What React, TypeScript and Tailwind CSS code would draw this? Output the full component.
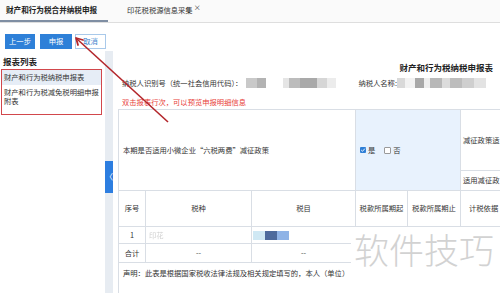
import React from "react";

const F = { fontFamily: '"Noto Sans CJK SC", "Noto Sans", sans-serif' };

function Mosaic({ cells }: { cells: [number, string][] }) {
  return (
    <div className="flex h-[10px] blur-[0.6px]">
      {cells.map(([w, c], i) => (
        <div key={i} style={{ width: w, background: c }} className="h-full" />
      ))}
    </div>
  );
}

export default function App() {
  return (
    <div style={F} className="relative w-[500px] h-[293px] overflow-hidden bg-white text-[#333]">
      {/* tab bar */}
      <div className="h-[23px] bg-[#fafafa] border-b border-[#dedede] flex items-stretch">
        <div className="w-[108px] border-b-2 border-[#7f8ea3] flex items-center pl-[6px] text-[7.6px] font-bold leading-none text-[#222]">
          财产和行为税合并纳税申报
        </div>
        <div className="ml-[19px] flex items-start pt-[6px] text-[7.3px] leading-[8px] text-[#333]">
          印花税税源信息采集
          <span className="ml-[1px] -mt-[2px] text-[7px] leading-none">×</span>
        </div>
      </div>

      {/* buttons */}
      <div className="flex items-center gap-[4px] pl-[5px] pt-[8px] h-[28px]">
        <div className="w-[30px] h-[15px] bg-[#2e80d8] text-white text-[7.3px] flex items-center justify-center">上一步</div>
        <div className="ml-[1px] w-[32px] h-[15px] bg-[#2e80d8] text-white text-[7.3px] flex items-center justify-center">申报</div>
        <div className="-ml-[1px] w-[31px] h-[15px] bg-white border border-[#a9c9ea] text-[#3d7fcc] text-[7.3px] flex items-center justify-center">取消</div>
      </div>

      {/* split area */}
      <div className="flex h-[242px]">
        {/* left panel */}
        <div className="w-[105px] pt-[4px]">
          <div className="pl-[3px] h-[12px] text-[8.5px] font-bold leading-[12px] text-[#222]">报表列表</div>
          <div className="mt-[2px] ml-[1px] w-[101px] border border-[#d2474c] text-[7.3px] text-[#333]">
            <div className="h-[15px] bg-[#e6edf6] pl-[2px] leading-[15px]">财产和行为税纳税申报表</div>
            <div className="pl-[2px] pt-[3px] pb-[8px] leading-[9px]">财产和行为税减免税明细申报附表</div>
          </div>
        </div>

        {/* splitter */}
        <div className="w-[8px] bg-[#e7ecf2] flex flex-col">
          <div className="h-[110px]" />
          <div className="h-[32px] bg-[#2d7ee0] text-white text-[8px] flex items-center justify-center leading-none">〈</div>
        </div>

        {/* main */}
        <div className="flex-1 pl-[5px] pt-[10px] min-w-0">
          <div className="h-[12px] leading-[12px] text-right pr-[7px] text-[8.5px] font-bold text-[#222]">财产和行为税纳税申报表</div>
          <div className="mt-[4px] h-[12px] flex items-center text-[7.3px] pl-[4px]">
            <span className="whitespace-nowrap">纳税人识别号（统一社会信用代码）：</span>
            <Mosaic cells={[[4, "#fff"], [11, "#c9c9c9"], [9, "#b3b3b3"], [17, "#fff"], [6, "#e5e5e5"], [11, "#bcbcbc"], [17, "#a9a9a9"], [10, "#d6d6d6"], [9, "#ececec"]]} />
            <span className="ml-[22px] whitespace-nowrap">纳税人名称:</span>
            <Mosaic cells={[[8, "#d9d9d9"], [10, "#f2f2f2"], [9, "#a8a8a8"], [6, "#eeeeee"], [12, "#b8b8b8"], [8, "#dcdcdc"], [12, "#bdbdbd"], [12, "#cfcfcf"], [12, "#e3e3e3"]]} />
          </div>
          <div className="mt-[7px] h-[12px] leading-[12px] pl-[4px] text-[7.3px] text-[#e8413a]">双击报表行次，可以预览申报明细信息</div>

          {/* table */}
          <div className="mt-[1px] grid grid-cols-[27px_106px_104px_52px_53px_40px] grid-rows-[61px_20px_36px_17px_19px_40px] border-l border-t border-[#d9dee5] text-[7.3px] w-[383px] overflow-hidden">
            <div className="col-span-3 row-span-2 border-r border-b border-[#d9dee5] flex items-center pl-[4px] whitespace-nowrap">
              本期是否适用小微企业“六税两费”减征政策
            </div>
            <div className="col-span-2 row-span-2 border-r border-b border-[#d9dee5] bg-[#e8f2fd] flex items-center pl-[4px] gap-[1px]">
              <span className="w-[6px] h-[6px] bg-[#2f7fd6] rounded-[1px] flex items-center justify-center">
                <svg viewBox="0 0 6 6" className="w-[6px] h-[6px]"><path d="M1.2 3 L2.5 4.3 L4.9 1.6" stroke="white" strokeWidth="0.9" fill="none" /></svg>
              </span>
              <span className="ml-[1px]">是</span>
              <span className="ml-[8px] w-[7px] h-[7px] border border-[#9a9a9a] bg-white rounded-[1px]" />
              <span className="ml-[1px]">否</span>
            </div>
            <div className="border-b border-[#d9dee5] flex items-center pl-[2px] whitespace-nowrap overflow-hidden">减征政策适</div>
            <div className="border-b border-[#d9dee5] flex items-center pl-[2px] whitespace-nowrap overflow-hidden">适用减征政</div>

            <div className="border-r border-b border-[#d9dee5] flex items-center justify-center">序号</div>
            <div className="border-r border-b border-[#d9dee5] flex items-center justify-center">税种</div>
            <div className="border-r border-b border-[#d9dee5] flex items-center justify-center">税目</div>
            <div className="border-r border-b border-[#d9dee5] flex items-center justify-center whitespace-nowrap">税款所属期起</div>
            <div className="border-r border-b border-[#d9dee5] flex items-center justify-center whitespace-nowrap">税款所属期止</div>
            <div className="border-b border-[#d9dee5] flex items-center pl-[8px] whitespace-nowrap overflow-hidden">计税依据</div>

            <div className="border-r border-b border-[#d9dee5] flex items-center justify-center">1</div>
            <div className="border-r border-b border-[#d9dee5] flex items-center pl-[3px] text-[#d0d0d0] blur-[0.4px]">印花</div>
            <div className="border-r border-b border-[#d9dee5] flex items-center pl-[1px]">
              <div className="flex h-[9px] blur-[0.5px]">
                <div className="w-[12px] bg-[#cfe8f4]" />
                <div className="w-[12px] bg-[#4d6a9c]" />
                <div className="w-[12px] bg-[#8fb3e6]" />
              </div>
            </div>
            <div className="border-r border-b border-[#d9dee5]" />
            <div className="border-r border-b border-[#d9dee5]" />
            <div className="border-b border-[#d9dee5]" />

            <div className="border-r border-b border-[#d9dee5] flex items-center justify-center">合计</div>
            <div className="border-r border-b border-[#d9dee5] flex items-center justify-center">--</div>
            <div className="border-r border-b border-[#d9dee5] flex items-center justify-center">--</div>
            <div className="border-r border-b border-[#d9dee5]" />
            <div className="border-r border-b border-[#d9dee5]" />
            <div className="border-b border-[#d9dee5]" />

            <div className="col-span-3 pl-[4px] pt-[5px] leading-[10px] whitespace-nowrap overflow-hidden">
              声明：此表是根据国家税收法律法规及相关规定填写的，本人（单位）
            </div>
          </div>
        </div>
      </div>

      {/* watermark */}
      <div className="absolute left-[351px] top-[227px] w-[149px] h-[66px] bg-white">
        <div className="pl-[3px] pt-[2px] text-[35px] leading-[40px] text-[#d2d2d2] font-light whitespace-nowrap">软件技巧</div>
      </div>

      {/* red arrow */}
      <svg className="absolute left-0 top-0 pointer-events-none" width="500" height="293">
        <line x1="168" y1="122" x2="77" y2="39" stroke="#b3262b" strokeWidth="1.6" />
        <path d="M76 38 L78 45 M76 38 L83 40" stroke="#b3262b" strokeWidth="1.8" fill="none" strokeLinecap="round" />
      </svg>
    </div>
  );
}
